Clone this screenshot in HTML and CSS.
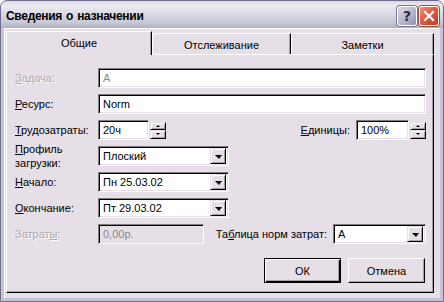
FILE: index.html
```html
<!DOCTYPE html>
<html lang="ru">
<head>
<meta charset="utf-8">
<title>Сведения о назначении</title>
<link rel="stylesheet" href="styles.css">
</head>
<body>
<div class="window">
  <div class="titlebar">
    <span class="title">Сведения о назначении</span>
    <div class="tb-buttons">
      <span class="tb-btn tb-help">?</span>
      <span class="tb-btn tb-close">
        <svg width="12" height="12" viewBox="0 0 12 12"><path d="M2 2 L10 10 M10 2 L2 10" stroke="#fff" stroke-width="2.2" stroke-linecap="square"/></svg>
      </span>
    </div>
  </div>
  <div class="client">
    <div class="tabs">
      <div class="tab tab-active">Общие</div>
      <div class="tab tab-track">Отслеживание</div>
      <div class="tab tab-notes">Заметки</div>
    </div>
    <div class="panel">
      <div class="row">
        <span class="label disabled"><u>З</u>адача:</span>
        <div class="field wide grey-text">А</div>
      </div>
      <div class="row">
        <span class="label"><u>Р</u>есурс:</span>
        <div class="field wide">Norm</div>
      </div>
      <div class="row">
        <span class="label"><u>Т</u>рудозатраты:</span>
        <div class="field w-work">20ч</div>
        <div class="spin"><span class="spin-btn"><i class="arr-up"></i></span><span class="spin-btn"><i class="arr-down"></i></span></div>
        <span class="label-right"><u>Е</u>диницы:</span>
        <div class="field w-units">100%</div>
        <div class="spin"><span class="spin-btn"><i class="arr-up"></i></span><span class="spin-btn"><i class="arr-down"></i></span></div>
      </div>
      <div class="row">
        <span class="label two-line"><u>П</u>рофиль<br>загрузки:</span>
        <div class="field combo w-combo"><span class="combo-text">Плоский</span><span class="drop"><i class="arr-drop"></i></span></div>
      </div>
      <div class="row">
        <span class="label"><u>Н</u>ачало:</span>
        <div class="field combo w-combo"><span class="combo-text">Пн 25.03.02</span><span class="drop"><i class="arr-drop"></i></span></div>
      </div>
      <div class="row">
        <span class="label"><u>О</u>кончание:</span>
        <div class="field combo w-combo"><span class="combo-text">Пт 29.03.02</span><span class="drop"><i class="arr-drop"></i></span></div>
      </div>
      <div class="row">
        <span class="label disabled">Затрат<u>ы</u>:</span>
        <div class="field w-cost field-disabled">0,00р.</div>
        <span class="label-right">Та<u>б</u>лица норм затрат:</span>
        <div class="field combo w-table"><span class="combo-text">А</span><span class="drop"><i class="arr-drop"></i></span></div>
      </div>
      <div class="buttons">
        <button class="btn btn-default">ОК</button>
        <button class="btn">Отмена</button>
      </div>
    </div>
  </div>
</div>
</body>
</html>
```

FILE: styles.css
```css
html, body {
  margin: 0;
  padding: 0;
  background: #ffffff;
}

body {
  font-family: "Liberation Sans", Arial, sans-serif;
  font-size: 11px;
  color: #000;
}

.window {
  width: 444px;
  height: 302px;
  box-sizing: border-box;
  display: flex;
  flex-direction: column;
  background: #c6c4d6;
  border: 1px solid #6e6c88;
  border-radius: 7px 7px 0 0;
  overflow: hidden;
}

.titlebar {
  height: 27px;
  flex: none;
  display: flex;
  align-items: center;
  justify-content: space-between;
  padding: 0 4px 0 5px;
  background: linear-gradient(#d8d8e2 0%, #ececf2 18%, #d8d8e2 50%, #c8c8d6 80%, #b0b0c4 100%);
}

.title {
  font-weight: bold;
  font-size: 12px;
  letter-spacing: -0.3px;
  word-spacing: 1px;
  color: #000;
  padding-top: 2px;
}

.tb-buttons {
  display: flex;
  gap: 2px;
  padding-top: 2px;
}

.tb-btn {
  width: 20px;
  height: 20px;
  box-sizing: border-box;
  border-radius: 3px;
  border: 1px solid #fff;
  display: flex;
  align-items: center;
  justify-content: center;
}

.tb-help {
  background: linear-gradient(135deg, #d8d8e6 0%, #b4b4c8 60%, #8e8ea8 100%);
  color: #2a2a40;
  font-family: "DejaVu Sans", sans-serif;
  font-weight: bold;
  font-size: 14px;
  box-shadow: 0 0 0 1px #7a7a96;
}

.tb-close {
  background: linear-gradient(135deg, #f0907a 0%, #e0563c 50%, #c83a20 100%);
  box-shadow: 0 0 0 1px #9a5040;
}

.client {
  flex: 1;
  margin: 0 3px 3px 3px;
  background: #e7dfe7;
  padding: 3px 6px 5px 2px;
  box-shadow: inset 1px 1px 0 #ffffff;
  display: flex;
  flex-direction: column;
}

.tabs {
  height: 23px;
  display: flex;
  align-items: flex-end;
  flex: none;
}

.tab {
  height: 21px;
  box-sizing: border-box;
  border-top: 1px solid #ffffff;
  border-left: 1px solid #ffffff;
  border-right: 1px solid #000000;
  box-shadow: inset -1px 0 0 #a39fa3;
  display: flex;
  align-items: center;
  justify-content: center;
  padding-top: 2px;
}

.tab-active {
  width: 146px;
  height: 24px;
  margin-bottom: -1px;
  position: relative;
  z-index: 1;
  background: #e7dfe7;
  padding-top: 0;
  padding-bottom: 2px;
}

.tab-track { width: 139px; }
.tab-notes { width: 143px; }

.panel {
  flex: 1;
  box-sizing: border-box;
  border-top: 1px solid #ffffff;
  border-left: 1px solid #ffffff;
  border-right: 1px solid #000000;
  border-bottom: 1px solid #000000;
  box-shadow: inset -1px -1px 0 #a39fa3;
  padding: 13px 7px 0 8px;
  display: flex;
  flex-direction: column;
  gap: 6px;
}

.row {
  height: 20px;
  display: flex;
  align-items: center;
}

.label {
  width: 83px;
  flex: none;
  white-space: nowrap;
}

.two-line {
  line-height: 14px;
}

.label-right {
  margin-left: auto;
  margin-right: 6px;
  white-space: nowrap;
}

.disabled {
  color: #aca8ac;
  text-shadow: 1px 1px 0 #ffffff;
}

.field {
  height: 20px;
  box-sizing: border-box;
  background: #ffffff;
  border: 1px solid;
  border-color: #807c80 #ffffff #ffffff #807c80;
  box-shadow: inset 1px 1px 0 #000000, inset -1px -1px 0 #e7dfe7;
  padding: 0 3px 0 4px;
  display: flex;
  align-items: center;
  white-space: nowrap;
  flex: none;
}

.grey-text { color: #8c888c; }

.wide { flex: 1; }
.w-work { width: 51px; }
.w-units { width: 53px; }
.w-combo { width: 131px; }
.w-cost { width: 106px; }
.w-table { width: 93px; }

.field-disabled {
  background: #e7dfe7;
  color: #8c888c;
}

.combo {
  padding: 2px 2px 2px 4px;
}

.combo-text {
  flex: 1;
}

.drop {
  width: 16px;
  height: 16px;
  box-sizing: border-box;
  background: #e7dfe7;
  border: 1px solid;
  border-color: #e7dfe7 #000000 #000000 #e7dfe7;
  box-shadow: inset 1px 1px 0 #ffffff, inset -1px -1px 0 #a39fa3;
  display: flex;
  align-items: center;
  justify-content: center;
  flex: none;
}

.arr-drop {
  width: 0;
  height: 0;
  border-left: 4px solid transparent;
  border-right: 3px solid transparent;
  border-top: 4px solid #000000;
  margin-top: 1px;
}

.spin {
  width: 16px;
  height: 17px;
  display: flex;
  flex-direction: column;
  margin-left: 1px;
  flex: none;
}

.spin-btn {
  flex: 1;
  box-sizing: border-box;
  background: #e7dfe7;
  border: 1px solid;
  border-color: #e7dfe7 #000000 #000000 #e7dfe7;
  box-shadow: inset 1px 1px 0 #ffffff, inset -1px -1px 0 #a39fa3;
  display: flex;
  align-items: center;
  justify-content: center;
}

.arr-up {
  width: 0;
  height: 0;
  border-left: 2px solid transparent;
  border-right: 2px solid transparent;
  border-bottom: 2px solid #000;
}

.arr-down {
  width: 0;
  height: 0;
  border-left: 2px solid transparent;
  border-right: 2px solid transparent;
  border-top: 2px solid #000;
}

.buttons {
  display: flex;
  justify-content: flex-end;
  gap: 7px;
  margin-top: 8px;
  padding-right: 1px;
}

.btn {
  width: 77px;
  height: 25px;
  box-sizing: border-box;
  font-family: "Liberation Sans", Arial, sans-serif;
  font-size: 11px;
  color: #000;
  background: #e7dfe7;
  border: 1px solid;
  border-color: #ffffff #000000 #000000 #ffffff;
  box-shadow: inset -1px -1px 0 #a39fa3;
  padding: 0;
}

.btn-default {
  border: 1px solid #000000;
  box-shadow: inset 1px 1px 0 #ffffff, inset -1px -1px 0 #000000, inset -2px -2px 0 #a39fa3;
}
```
